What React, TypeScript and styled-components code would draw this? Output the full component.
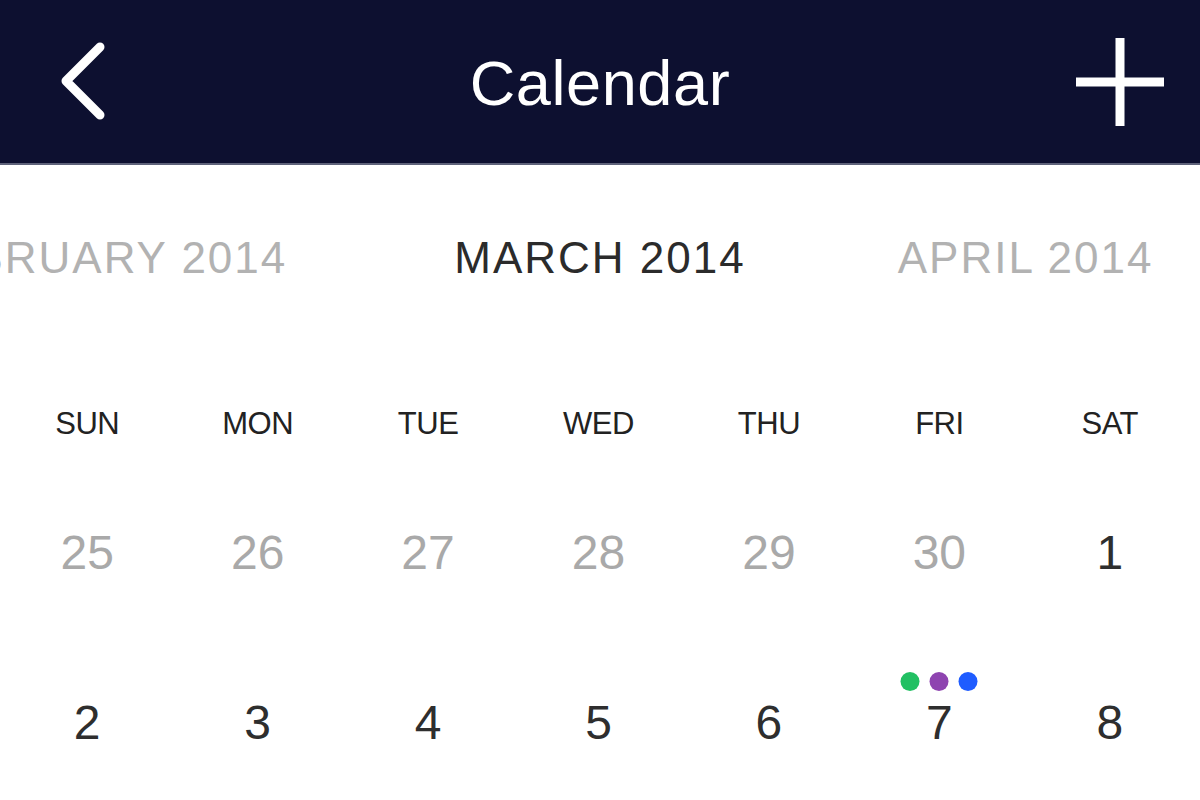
import styled, { createGlobalStyle } from "styled-components";

const GlobalStyle = createGlobalStyle`
    html, body {
        margin: 0;
        padding: 0;
        background: #ffffff;
        font-family: "Liberation Sans", Arial, sans-serif;
    }
`;

const Page = styled.div`
    width: 1200px;
    height: 800px;
    overflow: hidden;
    background: #ffffff;
`;

const Header = styled.header`
    height: 163px;
    background: #0d1030;
    border-bottom: 2px solid #5e627a;
    display: grid;
    grid-template-columns: minmax(0, 1fr) auto minmax(0, 1fr);
    align-items: center;
    padding: 0 36px;
`;

const Title = styled.h1`
    margin: 0;
    color: #ffffff;
    font-size: 63px;
    font-weight: 400;
    letter-spacing: 0.6px;
    line-height: 1;
    padding-top: 4px;
`;

const IconButton = styled.button<{ $align: "start" | "end" }>`
    justify-self: ${(p) => p.$align};
    margin-left: ${(p) => (p.$align === "start" ? "22px" : "0")};
    background: none;
    border: none;
    padding: 0;
    display: flex;
    cursor: pointer;
`;

const MonthStrip = styled.div`
    height: 186px;
    display: grid;
    grid-template-columns: minmax(0, 1fr) auto minmax(0, 1fr);
    align-items: center;
    overflow: hidden;
    white-space: nowrap;
`;

const Month = styled.div<{ $current?: boolean; $side?: "left" | "right" }>`
    font-size: 44px;
    font-weight: 300;
    letter-spacing: 2px;
    color: ${(p) => (p.$current ? "#2b2b2b" : "#b2b2b2")};
    justify-self: ${(p) => (p.$side === "left" ? "end" : p.$side === "right" ? "start" : "center")};
    margin-right: ${(p) => (p.$side === "left" ? "167px" : "0")};
    margin-left: ${(p) => (p.$side === "right" ? "152px" : "0")};
`;

const WeekdayRow = styled.div`
    height: 146px;
    padding: 0 5px 0 2px;
    display: grid;
    grid-template-columns: repeat(7, 1fr);
    align-items: center;
`;

const Weekday = styled.div`
    text-align: center;
    font-size: 31px;
    color: #222222;
    letter-spacing: -0.5px;
`;

const Weeks = styled.div`
    padding: 0 5px 0 2px;
    display: grid;
    grid-template-columns: repeat(7, 1fr);
    grid-auto-rows: 110px;
    row-gap: 60px;
`;

const Day = styled.div<{ $muted?: boolean }>`
    position: relative;
    display: flex;
    align-items: center;
    justify-content: center;
    font-size: 48px;
    color: ${(p) => (p.$muted ? "#a9a9a9" : "#2e2e2e")};
`;

const Dots = styled.div`
    position: absolute;
    top: calc(50% - 50px);
    left: 50%;
    transform: translateX(-50%);
    display: flex;
    gap: 10px;
`;

const Dot = styled.span<{ $color: string }>`
    width: 19px;
    height: 19px;
    border-radius: 50%;
    background: ${(p) => p.$color};
`;

const weekdays = ["SUN", "MON", "TUE", "WED", "THU", "FRI", "SAT"];

const days: { n: number; muted?: boolean; events?: string[] }[] = [
    { n: 25, muted: true },
    { n: 26, muted: true },
    { n: 27, muted: true },
    { n: 28, muted: true },
    { n: 29, muted: true },
    { n: 30, muted: true },
    { n: 1 },
    { n: 2 },
    { n: 3 },
    { n: 4 },
    { n: 5 },
    { n: 6 },
    { n: 7, events: ["#22c063", "#8e44b0", "#1f5cff"] },
    { n: 8 },
];

export default function App() {
    return (
        <Page>
            <GlobalStyle />
            <Header>
                <IconButton $align="start" aria-label="Back">
                    <svg width="56" height="84" viewBox="0 0 56 84">
                        <polyline
                            points="42,7 8,41 42,75"
                            fill="none"
                            stroke="#ffffff"
                            strokeWidth="9"
                            strokeLinecap="round"
                            strokeLinejoin="round"
                        />
                    </svg>
                </IconButton>
                <Title>Calendar</Title>
                <IconButton $align="end" aria-label="Add">
                    <svg width="88" height="88" viewBox="0 0 88 88">
                        <path d="M44 0V88M0 44H88" stroke="#ffffff" strokeWidth="9" />
                    </svg>
                </IconButton>
            </Header>
            <MonthStrip>
                <Month $side="left">FEBRUARY 2014</Month>
                <Month $current>MARCH 2014</Month>
                <Month $side="right">APRIL 2014</Month>
            </MonthStrip>
            <WeekdayRow>
                {weekdays.map((d) => (
                    <Weekday key={d}>{d}</Weekday>
                ))}
            </WeekdayRow>
            <Weeks>
                {days.map((d, i) => (
                    <Day key={i} $muted={d.muted}>
                        {d.events && (
                            <Dots>
                                {d.events.map((c) => (
                                    <Dot key={c} $color={c} />
                                ))}
                            </Dots>
                        )}
                        {d.n}
                    </Day>
                ))}
            </Weeks>
        </Page>
    );
}
